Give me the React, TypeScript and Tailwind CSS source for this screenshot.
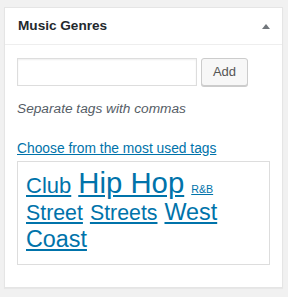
import React from "react";

const tags: { name: string; size: string }[] = [
  { name: "Club", size: "text-[22px]" },
  { name: "Hip Hop", size: "text-[29.33px]" },
  { name: "R&B", size: "text-[10.67px]" },
  { name: "Street", size: "text-[21.33px]" },
  { name: "Streets", size: "text-[21.33px]" },
  { name: "West", size: "text-[23.33px]" },
  { name: "Coast", size: "text-[23.33px]" },
];

export default function App() {
  return (
    <div
      className="min-h-screen w-[288px] bg-[#f1f1f1] pt-[7px] pl-[4px]"
      style={{ fontFamily: '"Liberation Sans", Arial, sans-serif' }}
    >
      <div className="w-[279px] border border-[#e5e5e5] bg-white shadow-[0_1px_1px_rgba(0,0,0,0.04)]">
        <div className="flex items-center justify-between border-b border-[#eeeeee] pl-[13px] pr-[12px] py-[8px]">
          <h2 className="text-[13.6px] font-bold leading-[19.6px] text-[#23282d]">Music Genres</h2>
          <svg width="8" height="5" viewBox="0 0 8 5" className="mt-[1px]">
            <polygon points="4,0 8,5 0,5" fill="#72777c" />
          </svg>
        </div>
        <div className="px-[12px] pt-[13px] pb-[22px]">
          <div className="flex items-start gap-[4px]">
            <input
              type="text"
              className="h-[28px] w-[180px] border border-[#dddddd] bg-white shadow-[inset_0_1px_2px_rgba(0,0,0,0.07)] outline-none"
            />
            <button className="h-[28px] w-[47px] rounded-[3px] border border-[#cccccc] bg-[#f7f7f7] text-[13px] text-[#555555] shadow-[0_1px_0_#cccccc]">
              Add
            </button>
          </div>
          <p className="mt-[13px] text-[13.7px] italic leading-[20px] text-[#555d66]">
            Separate tags with commas
          </p>
          <a className="mt-[19px] block text-[13.8px] leading-[21px] text-[#0073aa] underline">
            Choose from the most used tags
          </a>
          <div className="mt-[2px] h-[104px] border border-[#dddddd] pl-[8px] pr-[6px] pt-[6px]">
            <div className="flex flex-wrap items-baseline gap-x-[7px] gap-y-[4px]">
              {tags.map((t) => (
                <a key={t.name} className={`${t.size} leading-none text-[#0073aa] underline`}>
                  {t.name}
                </a>
              ))}
            </div>
          </div>
        </div>
      </div>
    </div>
  );
}
